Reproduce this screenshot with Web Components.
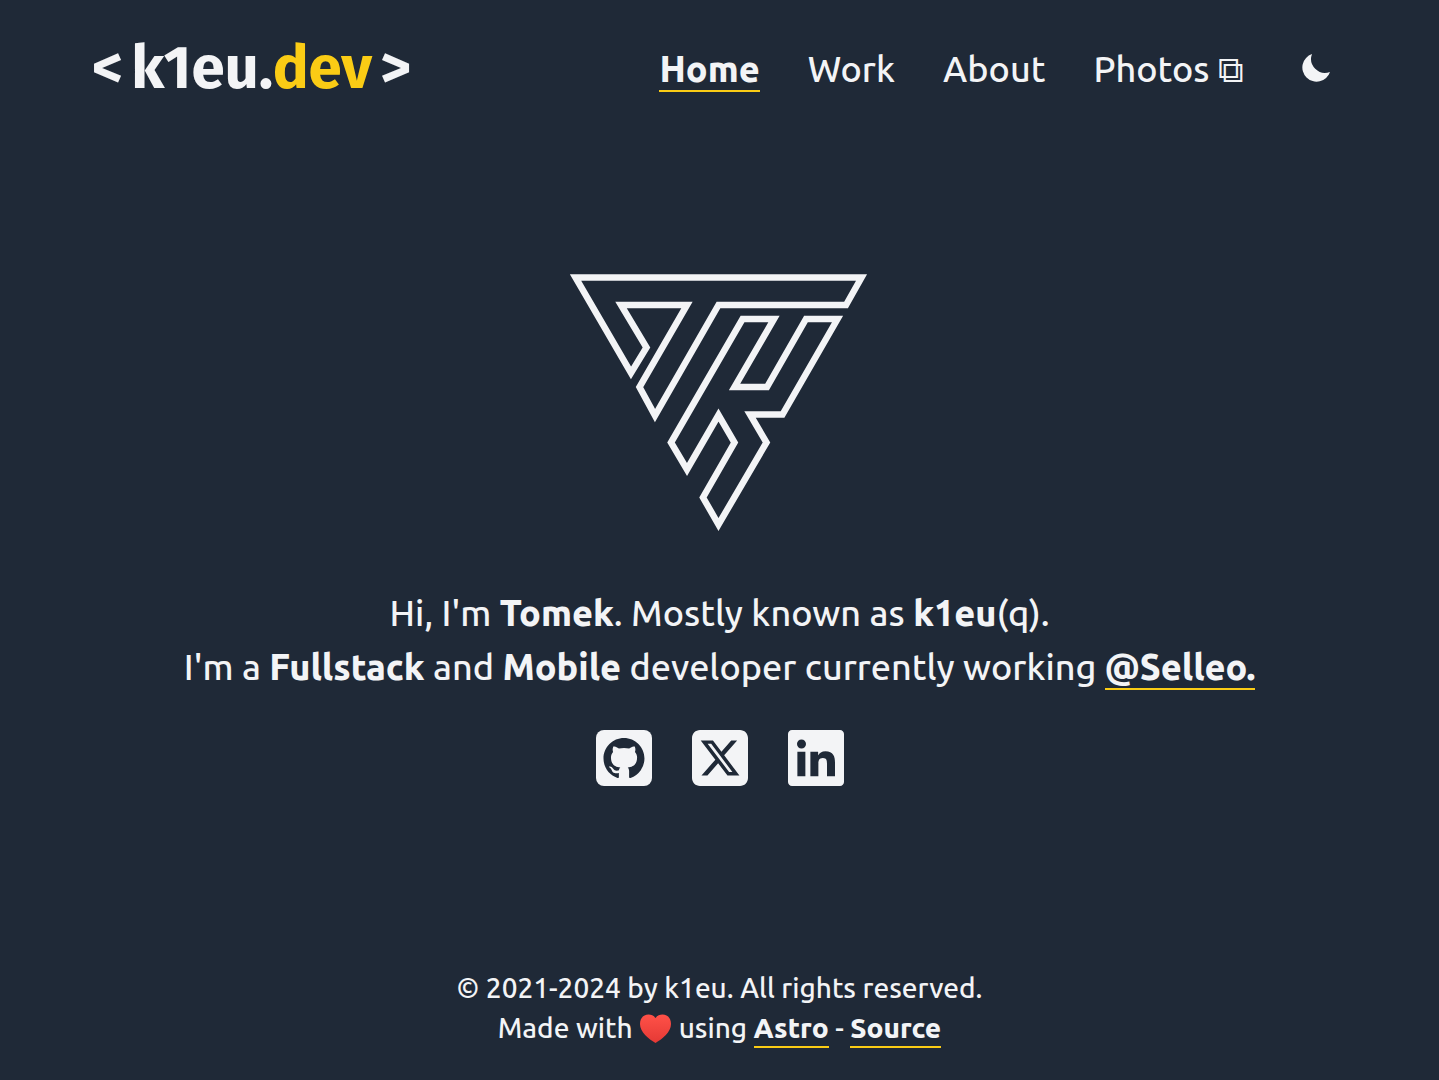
<!DOCTYPE html>
<html lang="en">
<head>
<meta charset="utf-8">
<meta name="viewport" content="width=device-width, initial-scale=1">
<title>k1eu.dev</title>
<style>
  :root {
    --background: #1f2937;
    --text: #f3f4f6;
    --accent: #facc15;
  }

  body {
    margin: 0;
    background-color: var(--background);
    color: var(--text);
    font-family: Ubuntu, "Noto Sans", "DejaVu Sans", sans-serif;
    font-weight: 475;
  }
</style>
</head>
<body>
<home-page></home-page>

<template id="site-logo">
  <style>
    :host {
      display: block;
    }

    a {
      display: flex;
      gap: 8px;
      color: var(--text);
      font-family: "Fira Sans", "Open Sans", sans-serif;
      font-size: 60px;
      font-weight: bold;
      line-height: 72px;
      text-decoration: none;
    }

    .logo__domain {
      color: var(--accent);
    }
  </style>
  <a href="/"><span>&lt;</span><span>k1eu.<span class="logo__domain">dev</span></span><span>&gt;</span></a>
</template>

<template id="text-link">
  <style>
    :host {
      display: inline-block;
    }

    a {
      display: block;
      color: inherit;
      line-height: var(--link-height, 42px);
      text-decoration: none;
      border-bottom: 2px solid transparent;
    }

    :host([active]) a {
      font-weight: 800;
      border-color: var(--accent);
    }

    a:hover {
      border-color: var(--accent);
    }
  </style>
  <a><slot></slot></a>
</template>

<template id="theme-toggle">
  <style>
    :host {
      display: block;
    }

    button {
      display: flex;
      padding: 10px;
      background: none;
      border: none;
      color: inherit;
      cursor: pointer;
    }
  </style>
  <button type="button" aria-label="Toggle dark mode">
    <svg width="28" height="28" viewBox="0 0 28 28" fill="currentColor" aria-hidden="true">
      <path d="M10 0A14.200 14.200 0 1 0 28 18A14 14 0 0 1 10 0Z"/>
    </svg>
  </button>
</template>

<template id="site-header">
  <style>
    :host {
      display: block;
    }

    header {
      display: flex;
      align-items: center;
      justify-content: space-between;
      padding: 32px 99px 32px 92px;
    }

    nav {
      display: flex;
      align-items: center;
      gap: 48px;
      font-size: 36px;
    }

    text-link {
      padding-top: 4px;
    }
  </style>
  <header>
    <site-logo></site-logo>
    <nav>
      <text-link href="/" active>Home</text-link>
      <text-link href="/work">Work</text-link>
      <text-link href="/about">About</text-link>
      <text-link href="https://photos.k1eu.dev">Photos ⧉</text-link>
      <theme-toggle></theme-toggle>
    </nav>
  </header>
</template>

<template id="brand-mark">
  <style>
    :host {
      display: block;
    }

    svg {
      display: block;
    }
  </style>
  <svg width="299" height="257" viewBox="0 0 299 257" fill="none" stroke="currentColor" stroke-width="6.500" role="img" aria-label="TK">
    <path d="M5.500 3.500H291.500L276 31H148.500L85 141.500 69.500 113 117 31H51L76.500 73.500 61 99Z"/>
    <path d="M172.500 45H204L164.500 113H197L236 45H267.500L212.500 140.500H180L196.500 168.500 148.500 250.500 133 223.500 164.500 168.500 148.500 141 117 195.500 101 168.500Z"/>
  </svg>
</template>

<template id="social-link">
  <style>
    :host {
      display: block;
    }

    a {
      display: block;
      color: inherit;
    }

    svg {
      display: block;
    }
  </style>
  <a></a>
</template>

<template id="home-hero">
  <style>
    :host {
      display: flex;
      flex-direction: column;
      align-items: center;
      padding: 0 32px;
    }

    p {
      margin: 55px 0 36px;
      font-size: 36px;
      line-height: 54px;
      text-align: center;
    }

    b {
      font-weight: 800;
    }

    .hero__socials {
      display: flex;
      gap: 40px;
    }
  </style>
  <brand-mark></brand-mark>
  <p>
    Hi, I'm <b>Tomek</b>. Mostly known as <b>k1eu</b>(q).<br>
    I'm a <b>Fullstack</b> and <b>Mobile</b> developer currently working
    <text-link href="https://selleo.com" active>@Selleo.</text-link>
  </p>
  <div class="hero__socials">
    <social-link icon="github" label="GitHub" href="https://github.com/k1eu"></social-link>
    <social-link icon="x" label="X" href="https://x.com/k1eu"></social-link>
    <social-link icon="linkedin" label="LinkedIn" href="https://linkedin.com"></social-link>
  </div>
</template>

<template id="site-footer">
  <style>
    :host {
      display: block;
    }

    footer {
      --link-height: 36px;
      padding: 0 32px 32px;
      font-size: 28px;
      line-height: 40px;
      text-align: center;
    }

    svg {
      vertical-align: -6px;
    }
  </style>
  <footer>
    <div>© 2021-2024 by k1eu. All rights reserved.</div>
    <div>
      Made with
      <svg width="33" height="30" viewBox="0 0 33 30" role="img" aria-label="love">
        <defs>
          <linearGradient id="heart" x1="0" y1="0" x2="0" y2="1">
            <stop offset="0" stop-color="#ff5148"/>
            <stop offset="1" stop-color="#e53935"/>
          </linearGradient>
        </defs>
        <path fill="url(#heart)" d="M16.500 4C13.500 0 8.500 0 5.500 1.500C2.500 3 1 6 1 10C1 18 9.500 25 16.500 29C23.500 25 32 18 32 10C32 6 30.500 3 27.500 1.500C24.500 0 19.500 0 16.500 4Z"/>
      </svg>
      using
      <text-link href="https://astro.build" active>Astro</text-link>
      -
      <text-link href="https://github.com/k1eu" active>Source</text-link>
    </div>
  </footer>
</template>

<template id="home-page">
  <style>
    :host {
      display: flex;
      flex-direction: column;
      justify-content: space-between;
      min-height: 100vh;
    }

    main {
      /* keeps the hero a little above the middle */
      padding-bottom: 45px;
    }
  </style>
  <site-header></site-header>
  <main><home-hero></home-hero></main>
  <site-footer></site-footer>
</template>

<script>
  const socialIcons = {
    github: `
      <rect width="56" height="56" rx="8" fill="currentColor"/>
      <path transform="translate(7.500 8) scale(2.560)" fill="var(--background)" d="M8 0C3.580 0 0 3.580 0 8c0 3.540 2.290 6.530 5.470 7.590.4.070.550-.170.550-.380 0-.190-.010-.820-.010-1.490-2.010.370-2.530-.490-2.690-.940-.090-.230-.480-.940-.820-1.130-.280-.150-.680-.520-.010-.530.630-.010 1.080.580 1.230.820.720 1.210 1.870.870 2.330.660.070-.520.280-.870.510-1.070-1.780-.2-3.640-.890-3.640-3.950 0-.870.310-1.590.820-2.150-.080-.2-.360-1.020.080-2.120 0 0 .670-.210 2.200.820.640-.180 1.320-.270 2-.270s1.360.090 2 .270c1.530-1.040 2.200-.820 2.200-.820.440 1.100.160 1.920.080 2.120.510.560.820 1.270.820 2.150 0 3.070-1.870 3.750-3.650 3.950.290.250.540.730.540 1.480 0 1.070-.010 1.930-.010 2.200 0 .210.150.460.550.380A8.013 8.013 0 0 0 16 8c0-4.420-3.580-8-8-8z"/>`,
    x: `
      <path transform="scale(.125) translate(0 -32)" fill="currentColor" d="M64 32C28.700 32 0 60.700 0 96V416c0 35.300 28.700 64 64 64H384c35.300 0 64-28.700 64-64V96c0-35.300-28.700-64-64-64H64zm297.100 84L257.300 234.600 379.400 396H283.800L209 298.100 123.300 396H75.800l111-126.900L69.700 116h98l67.700 89.500L313.600 116h47.500zM323.300 367.600L153.400 142.900H125.100L296.900 367.600h26.300z"/>`,
    linkedin: `
      <path transform="scale(.125) translate(0 -32)" fill="currentColor" d="M416 32H31.900C14.300 32 0 46.500 0 64.300v383.400C0 465.500 14.300 480 31.900 480H416c17.600 0 32-14.500 32-32.300V64.300c0-17.800-14.400-32.300-32-32.300zM139 402H75V206.200h64V402zm-31-222c-19.900 0-36-16.100-36-36s16.100-36 36-36 36 16.100 36 36-16.100 36-36 36zm268 222h-64V306c0-24.800-.5-50-33-50-33 0-36 24-36 50v96h-64V206.200h62v27h.9c8.300-15.700 28.500-32.200 58-32.200 62.500 0 76.100 40.900 76.100 94V402z"/>`,
  };

  class TemplateElement extends HTMLElement {
    constructor() {
      super();
      this.attachShadow({ mode: "open" });
    }

    connectedCallback() {
      const template = document.getElementById(this.localName);
      this.shadowRoot.replaceChildren(template.content.cloneNode(true));
    }
  }

  class SiteLogo extends TemplateElement {}
  class ThemeToggle extends TemplateElement {}
  class SiteHeader extends TemplateElement {}
  class BrandMark extends TemplateElement {}
  class HomeHero extends TemplateElement {}
  class SiteFooter extends TemplateElement {}
  class HomePage extends TemplateElement {}

  class TextLink extends TemplateElement {
    connectedCallback() {
      super.connectedCallback();
      this.shadowRoot.querySelector("a").href = this.getAttribute("href");
    }
  }

  class SocialLink extends TemplateElement {
    connectedCallback() {
      super.connectedCallback();
      const link = this.shadowRoot.querySelector("a");
      const icon = this.getAttribute("icon");
      link.href = this.getAttribute("href");
      link.setAttribute("aria-label", this.getAttribute("label"));
      link.innerHTML = `<svg width="56" height="56" viewBox="0 0 56 56" aria-hidden="true">${socialIcons[icon]}</svg>`;
    }
  }

  window.customElements.define("site-logo", SiteLogo);
  window.customElements.define("text-link", TextLink);
  window.customElements.define("theme-toggle", ThemeToggle);
  window.customElements.define("site-header", SiteHeader);
  window.customElements.define("brand-mark", BrandMark);
  window.customElements.define("social-link", SocialLink);
  window.customElements.define("home-hero", HomeHero);
  window.customElements.define("site-footer", SiteFooter);
  window.customElements.define("home-page", HomePage);
</script>
</body>
</html>
